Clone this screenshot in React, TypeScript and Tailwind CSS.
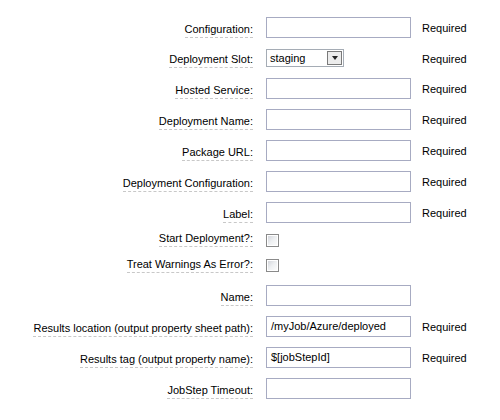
const FONT = "font-['Liberation_Sans',Arial,sans-serif]";

type Row =
  | { kind: "text"; label: string; value?: string; required?: boolean }
  | { kind: "select"; label: string; value: string; required?: boolean }
  | { kind: "check"; label: string };

const rows: Row[] = [
  { kind: "text", label: "Configuration:", required: true },
  { kind: "select", label: "Deployment Slot:", value: "staging", required: true },
  { kind: "text", label: "Hosted Service:", required: true },
  { kind: "text", label: "Deployment Name:", required: true },
  { kind: "text", label: "Package URL:", required: true },
  { kind: "text", label: "Deployment Configuration:", required: true },
  { kind: "text", label: "Label:", required: true },
  { kind: "check", label: "Start Deployment?:" },
  { kind: "check", label: "Treat Warnings As Error?:" },
  { kind: "text", label: "Name:" },
  { kind: "text", label: "Results location (output property sheet path):", value: "/myJob/Azure/deployed", required: true },
  { kind: "text", label: "Results tag (output property name):", value: "$[jobStepId]", required: true },
  { kind: "text", label: "JobStep Timeout:" },
];

function Label({ text }: { text: string }) {
  return (
    <div className="w-[253px] shrink-0 self-stretch flex items-end justify-end pb-[5px]">
      <span className="leading-[13px] pb-[1px] border-b border-dashed border-[#c8c8c8]">{text}</span>
    </div>
  );
}

function TextBox({ value }: { value?: string }) {
  return (
    <div className="w-[145px] h-[21px] border border-[#a7abc2] bg-white flex items-center px-[4px] leading-[13px] text-black">
      {value}
    </div>
  );
}

function SelectBox({ value }: { value: string }) {
  return (
    <div className="w-[78px] h-[18px] border border-[#a5acb5] bg-white flex items-center justify-between pl-[3px] pr-[1px]">
      <span className="leading-[13px]">{value}</span>
      <div className="w-[15px] h-[14px] border border-[#7a7a7a] bg-[#ececec] flex items-center justify-center">
        <div className="w-0 h-0 border-l-[3.5px] border-r-[3.5px] border-t-[4px] border-l-transparent border-r-transparent border-t-[#222]" />
      </div>
    </div>
  );
}

function CheckBox() {
  return (
    <div className="w-[13px] h-[13px] border border-[#8a8a8a] bg-white p-[1px]">
      <div className="w-full h-full bg-gradient-to-br from-[#d4d6dc] via-[#eef0f2] to-[#fbfbfb]" />
    </div>
  );
}

export default function App() {
  return (
    <div className={`w-[500px] h-[420px] bg-white text-[11px] text-black ${FONT} pt-[12px]`}>
      {rows.map((r) => {
        let h = "h-[31px]";
        if (r.label === "Deployment Slot:") h = "h-[30px]";
        if (r.label === "Start Deployment?:") h = "h-[24px]";
        if (r.label === "Treat Warnings As Error?:") h = "h-[26px] mb-[2px]";
        return (
          <div key={r.label} className={`flex items-center ${h}`}>
            <Label text={r.label} />
            <div className="ml-[13px] w-[145px] shrink-0 flex items-center">
              {r.kind === "text" && <TextBox value={r.value} />}
              {r.kind === "select" && <SelectBox value={r.value} />}
              {r.kind === "check" && <CheckBox />}
            </div>
            {"required" in r && r.required && <span className="ml-[11px] mt-[2px] leading-[13px]">Required</span>}
          </div>
        );
      })}
    </div>
  );
}
